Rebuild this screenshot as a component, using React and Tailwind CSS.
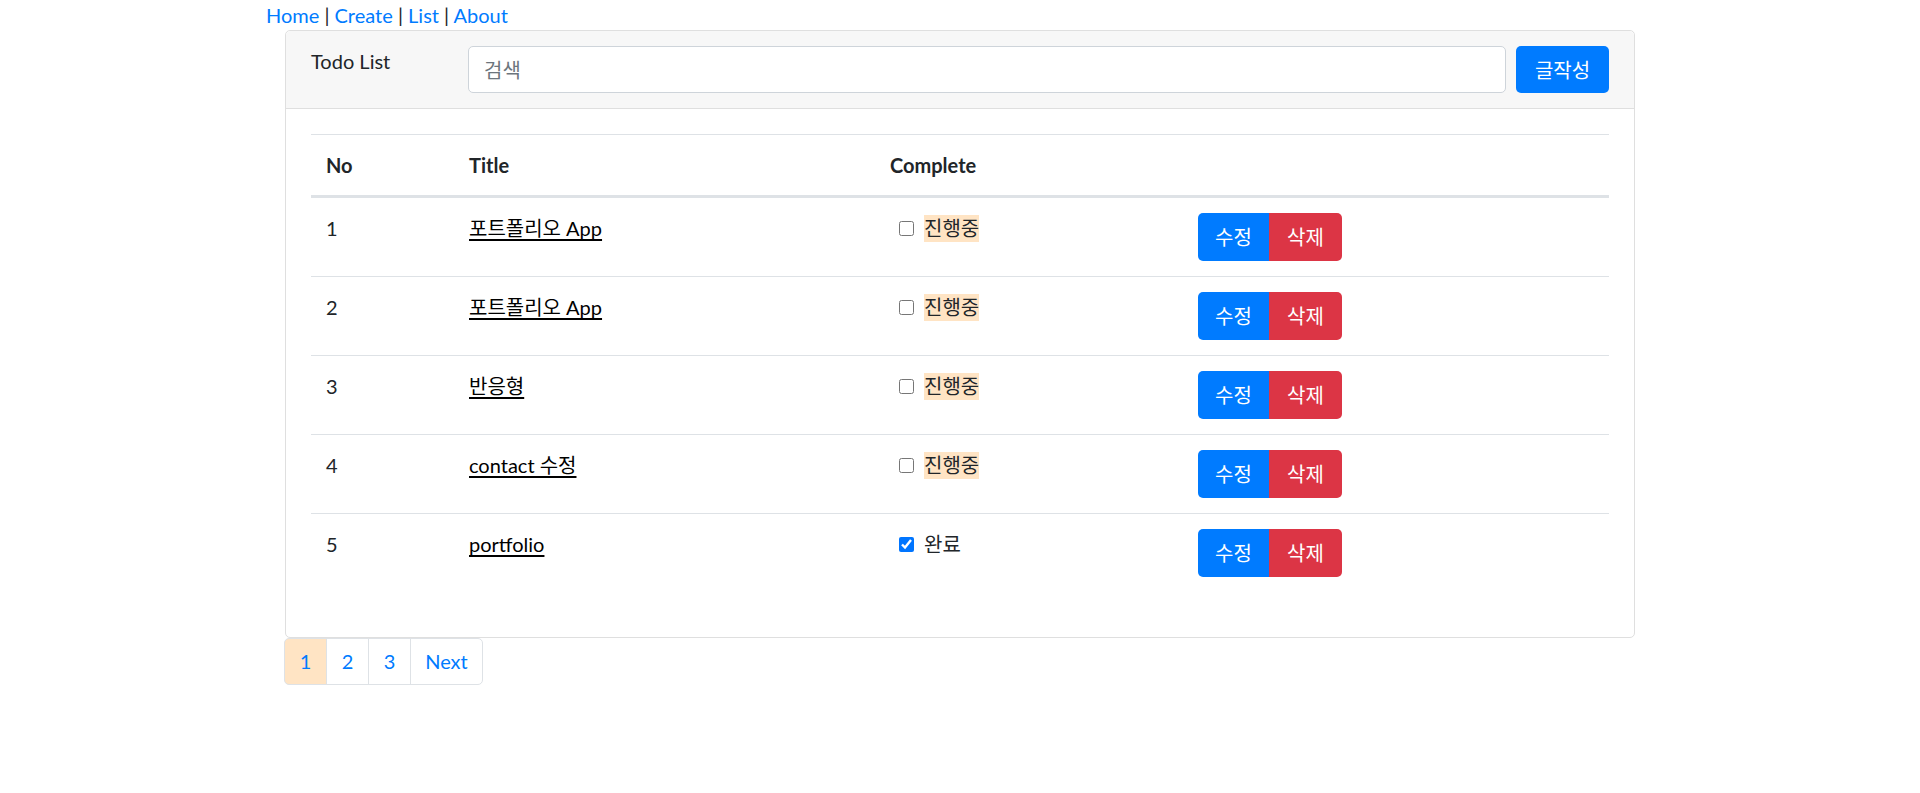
import React, { useState } from 'react';

const todos = [
    { id: 1, title: '포트폴리오 App', done: false },
    { id: 2, title: '포트폴리오 App', done: false },
    { id: 3, title: '반응형', done: false },
    { id: 4, title: 'contact 수정', done: false },
    { id: 5, title: 'portfolio', done: true },
];

const Row = ({ todo, first }) => {
    const [done, setDone] = useState(todo.done);
    const cell = `px-[15px] py-[15px] align-top ${first ? '' : 'border-t border-[#dee2e6]'}`;

    return (
        <tr>
            <td className={cell}>{todo.id}</td>
            <td className={cell}>
                <a href="#" className="text-black underline underline-offset-[3px]">{todo.title}</a>
            </td>
            <td className={cell}>
                <div className="flex items-center h-[30px]">
                    <input
                        type="checkbox"
                        checked={done}
                        onChange={() => setDone(!done)}
                        className="w-[15px] h-[15px] ml-[9px] mr-[10px] m-0 accent-[#0075ff]"
                    />
                    {done ? (
                        <span className="h-[27px] leading-[27px]">완료</span>
                    ) : (
                        <span className="h-[27px] leading-[27px] bg-[#ffe4c4]">진행중</span>
                    )}
                </div>
            </td>
            <td className={cell}>
                <div className="flex">
                    <button className="h-[48px] w-[71px] bg-[#007bff] text-white rounded-l-[5px]">수정</button>
                    <button className="h-[48px] w-[73px] bg-[#dc3545] text-white rounded-r-[5px]">삭제</button>
                </div>
            </td>
        </tr>
    );
};

export default function App() {
    return (
        <div
            className="min-h-screen bg-white text-[20px] leading-[30px] text-[#212529]"
            style={{ fontFamily: 'Lato, "Noto Sans CJK KR", sans-serif' }}
        >
            <div className="w-[1426px] mx-auto px-[19px]">
                {/* top nav */}
                <nav className="h-[30px]">
                    <a href="#" className="text-[#007bff]">Home</a> | <a href="#" className="text-[#007bff]">Create</a> |{' '}
                    <a href="#" className="text-[#007bff]">List</a> | <a href="#" className="text-[#007bff]">About</a>
                </nav>

                <div className="mx-[19px]">
                    <div className="border border-[#dfdfdf] rounded-[5px] bg-white">
                        <div className="flex bg-[#f7f7f7] px-[25px] py-[15px] border-b border-[#dfdfdf] rounded-t-[5px]">
                            <div className="w-[157px] shrink-0">Todo List</div>
                            <input
                                type="text"
                                placeholder="검색"
                                className="flex-1 h-[47px] px-[15px] bg-white border border-[#ced4da] rounded-[5px] outline-none placeholder:text-[#6c757d]"
                            />
                            <button className="ml-[10px] h-[47px] w-[93px] bg-[#007bff] text-white rounded-[5px]">글작성</button>
                        </div>

                        <div className="p-[25px]">
                            <table className="w-full border-collapse mb-[20px]">
                                <thead>
                                    <tr className="text-left">
                                        <th className="w-[143px] px-[15px] py-[15px] font-bold border-t border-[#dee2e6] border-b-[3px] border-b-[#dee2e6]">No</th>
                                        <th className="w-[421px] px-[15px] py-[15px] font-bold border-t border-[#dee2e6] border-b-[3px] border-b-[#dee2e6]">Title</th>
                                        <th className="w-[308px] px-[15px] py-[15px] font-bold border-t border-[#dee2e6] border-b-[3px] border-b-[#dee2e6]">Complete</th>
                                        <th className="px-[15px] py-[15px] border-t border-[#dee2e6] border-b-[3px] border-b-[#dee2e6]"></th>
                                    </tr>
                                </thead>
                                <tbody>
                                    {todos.map((t, i) => (
                                        <Row key={t.id} todo={t} first={i === 0} />
                                    ))}
                                </tbody>
                            </table>
                        </div>
                    </div>

                    {/* pagination */}
                    <ul className="flex -ml-px leading-[25px]">
                        <li><a href="#" className="block w-[43px] text-center py-[10px] border border-[#dee2e6] rounded-l-[5px] bg-[#ffe4c4] text-[#007bff]">1</a></li>
                        <li><a href="#" className="block w-[43px] -ml-px text-center py-[10px] border border-[#dee2e6] text-[#007bff]">2</a></li>
                        <li><a href="#" className="block w-[43px] -ml-px text-center py-[10px] border border-[#dee2e6] text-[#007bff]">3</a></li>
                        <li><a href="#" className="block w-[73px] -ml-px text-center py-[10px] border border-[#dee2e6] rounded-r-[5px] text-[#007bff]">Next</a></li>
                    </ul>
                </div>
            </div>
        </div>
    );
}
